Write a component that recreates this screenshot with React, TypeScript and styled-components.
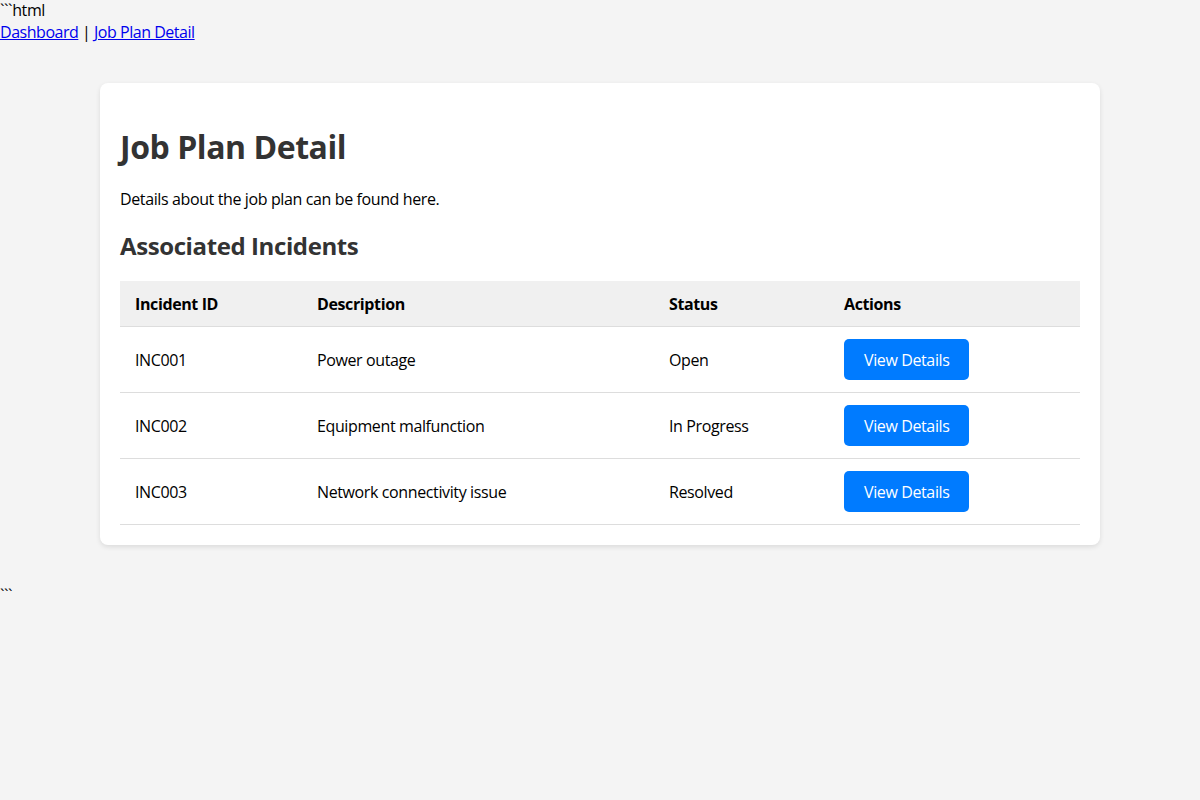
import React from "react";
import styled, { createGlobalStyle } from "styled-components";

const Global = createGlobalStyle`
  html, body { margin: 0; padding: 0; }
  body {
    background: #f4f4f4;
    font-family: "Open Sans", "Noto Sans", sans-serif;
    font-size: 16px;
    line-height: 1.333;
    letter-spacing: -0.38px;
    color: #000;
  }
`;

const Fence = styled.div`
  line-height: 1.333;
`;

const Nav = styled.nav`
  line-height: 1.333;
  letter-spacing: -0.47px;
  padding-top: 1px;
  margin-bottom: -1px;
  a { color: #0000ee; text-decoration: underline; }
`;

const Card = styled.div`
  width: 960px;
  margin: 40px auto;
  padding: 20px;
  background: #fff;
  border-radius: 8px;
  box-shadow: 0 2px 5px rgba(0, 0, 0, 0.1);
`;

const Title = styled.h1`
  margin: 23px 0 20.9px;
  font-size: 32px;
  line-height: 1.333;
  letter-spacing: -0.45px;
  font-weight: 700;
  color: #333;
`;

const Para = styled.p`
  margin: 16px 0 15px;
`;

const Subtitle = styled.h2`
  margin: 20px 0 18.9px;
  font-size: 24px;
  line-height: 1.333;
  letter-spacing: -0.4px;
  font-weight: 700;
  color: #333;
`;

const Table = styled.table`
  width: 100%;
  border-collapse: collapse;
`;

const Th = styled.th`
  text-align: left;
  padding: 13px 15px 11px;
  line-height: 21px;
  background: #f0f0f0;
  border-bottom: 1px solid #ddd;
  font-weight: 700;
`;

const Td = styled.td`
  padding: 12px 15px;
  line-height: 21px;
  border-bottom: 1px solid #ddd;
`;

const Cell = styled.span`
  display: inline-block;
  padding-top: 2px;
  margin-bottom: -2px;
`;

const Button = styled.button`
  font-family: inherit;
  font-size: 16px;
  line-height: 21px;
  letter-spacing: -0.38px;
  padding: 11px 20px 9px;
  background: #007bff;
  color: #fff;
  border: none;
  border-radius: 5px;
  cursor: pointer;
`;

const rows = [
  { id: "INC001", desc: "Power outage", status: "Open" },
  { id: "INC002", desc: "Equipment malfunction", status: "In Progress" },
  { id: "INC003", desc: "Network connectivity issue", status: "Resolved" },
];

export default function App() {
  return (
    <>
      <Global />
      <Fence>```html</Fence>
      <Nav>
        <a href="#">Dashboard</a> | <a href="#">Job Plan Detail</a>
      </Nav>
      <Card>
        <Title>Job Plan Detail</Title>
        <Para>Details about the job plan can be found here.</Para>
        <Subtitle>Associated Incidents</Subtitle>
        <Table>
          <colgroup>
            <col style={{ width: 182 }} />
            <col style={{ width: 352 }} />
            <col style={{ width: 175 }} />
            <col />
          </colgroup>
          <thead>
            <tr>
              <Th>Incident ID</Th>
              <Th>Description</Th>
              <Th>Status</Th>
              <Th>Actions</Th>
            </tr>
          </thead>
          <tbody>
            {rows.map((r) => (
              <tr key={r.id}>
                <Td><Cell>{r.id}</Cell></Td>
                <Td><Cell>{r.desc}</Cell></Td>
                <Td><Cell>{r.status}</Cell></Td>
                <Td>
                  <Button>View Details</Button>
                </Td>
              </tr>
            ))}
          </tbody>
        </Table>
      </Card>
      <Fence>```</Fence>
    </>
  );
}
